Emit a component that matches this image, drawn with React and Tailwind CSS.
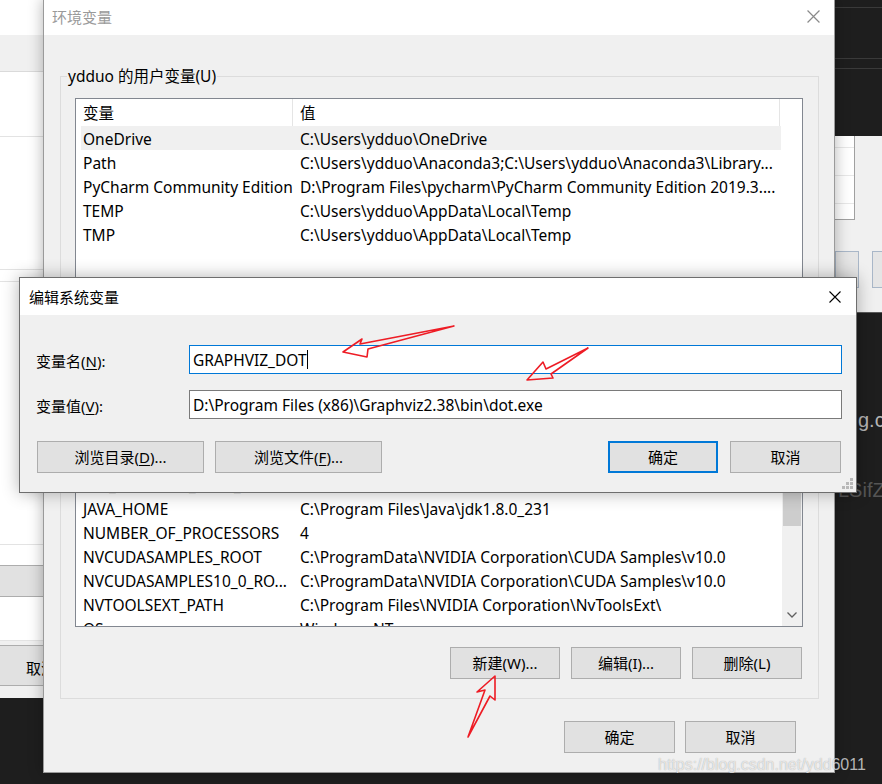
import clsx from 'clsx';

const userVars = [
  ['OneDrive', 'C:\\Users\\ydduo\\OneDrive'],
  ['Path', 'C:\\Users\\ydduo\\Anaconda3;C:\\Users\\ydduo\\Anaconda3\\Library...'],
  ['PyCharm Community Edition', 'D:\\Program Files\\pycharm\\PyCharm Community Edition 2019.3....'],
  ['TEMP', 'C:\\Users\\ydduo\\AppData\\Local\\Temp'],
  ['TMP', 'C:\\Users\\ydduo\\AppData\\Local\\Temp'],
];

const sysVars = [
  ['ComSpec', 'C:\\WINDOWS\\system32\\cmd.exe'],
  ['DriverData', 'C:\\Windows\\System32\\Drivers\\DriverData'],
  ['FPS_BROWSER_USER_PR...', 'Default'],
  ['JAVA_HOME', 'C:\\Program Files\\Java\\jdk1.8.0_231'],
  ['NUMBER_OF_PROCESSORS', '4'],
  ['NVCUDASAMPLES_ROOT', 'C:\\ProgramData\\NVIDIA Corporation\\CUDA Samples\\v10.0'],
  ['NVCUDASAMPLES10_0_RO...', 'C:\\ProgramData\\NVIDIA Corporation\\CUDA Samples\\v10.0'],
  ['NVTOOLSEXT_PATH', 'C:\\Program Files\\NVIDIA Corporation\\NvToolsExt\\'],
  ['OS', 'Windows_NT'],
];

const CloseX = ({ color = '#000', size = 12 }) => (
  <svg width={size} height={size} viewBox="0 0 12 12">
    <path d="M0.5 0.5 L11.5 11.5 M11.5 0.5 L0.5 11.5" stroke={color} strokeWidth="1.1" />
  </svg>
);

const Btn = ({ children, className, primary }) => (
  <div
    className={clsx(
      'h-[32px] flex items-center justify-center bg-[#e1e1e1] text-black text-[15px]',
      primary ? 'border-2 border-[#0078d7]' : 'border border-[#adadad]',
      className
    )}
  >
    {children}
  </div>
);

const ListHeader = () => (
  <div className="flex h-[27px] shrink-0">
    <div className="w-[217px] pl-[7px] pt-[1px] flex items-center border-r border-[#e5e5e5]">变量</div>
    <div className="w-[487px] pl-[7px] pt-[1px] flex items-center border-r border-[#e5e5e5]">值</div>
  </div>
);

const Row = ({ name, value, selected }) => (
  <div className={clsx('ml-[5px] w-[700px] h-[24px] shrink-0 flex items-center pt-[1px]', selected && 'bg-[#f0f0f0]')}>
    <div className="w-[212px] pl-[2px] whitespace-nowrap overflow-hidden">{name}</div>
    <div className="flex-1 pl-[7px] whitespace-nowrap overflow-hidden">{value}</div>
  </div>
);

export default function App() {
  return (
    <div className="relative w-[882px] h-[784px] overflow-hidden bg-[#1e1e1e] text-[15.5px] leading-[20px] text-black font-['Noto_Sans','Noto_Sans_CJK_SC',sans-serif]">

      {/* dark desktop bits on the right */}
      <div className="absolute left-[835px] top-[7px] w-[60px] h-px bg-[#3a3a3a]" />
      <div className="absolute left-[835px] top-[58px] w-[60px] h-px bg-[#3a3a3a]" />
      <div className="absolute left-[835px] top-[68px] w-[60px] h-px bg-[#3a3a3a]" />
      <div className="absolute left-[858px] top-[410px] text-[20px] text-[#b4b4b4] font-['Liberation_Sans',sans-serif]">g.cs</div>
      <div className="absolute left-[838px] top-[480px] text-[20px] text-[#555] font-['Liberation_Sans',sans-serif]">LSifZC</div>

      {/* window behind, left */}
      <div className="absolute left-0 top-0 w-[60px] h-[698px] bg-white flex flex-col">
        <div className="h-[35px] shrink-0" />
        <div className="h-[37px] shrink-0 bg-[#f0f0f0] border-b border-[#dadada]" />
        <div className="h-[65px] shrink-0 border-b border-[#e3e3e3]" />
        <div className="h-[133px] shrink-0 border-b border-[#e3e3e3]" />
        <div className="h-[12px] shrink-0 border-b border-[#e3e3e3]" />
        <div className="h-[263px] shrink-0 border-b border-[#e3e3e3]" />
        <div className="h-[20px] shrink-0" />
        <div className="h-[32px] shrink-0 bg-[#e1e1e1] border-y border-[#adadad]" />
        <div className="h-[44px] shrink-0 border-b border-[#e3e3e3]" />
        <div className="h-[4px] shrink-0 bg-[#f0f0f0]" />
        <div className="h-[41px] shrink-0 bg-[#e1e1e1] border-y border-[#adadad] flex items-center pl-[26px] pt-[4px] text-[15px]">取消</div>
        <div className="flex-1 bg-[#f0f0f0]" />
      </div>

      {/* window behind, right */}
      <div className="absolute left-[835px] top-[136px] w-[60px] h-[177px] bg-[#f0f0f0] border-b border-[#5a5a5a] flex flex-col">
        <div className="w-[20px] h-[84px] bg-white border-r border-b border-[#a0a0a0] flex flex-col">
          <div className="h-[12px] border-b border-[#e8e8e8]" />
          <div className="h-[28px] border-b border-[#e8e8e8]" />
          <div className="h-[28px] border-b border-[#e8e8e8]" />
        </div>
        <div className="mt-[31px] flex gap-[13px]">
          <div className="w-[29px] h-[37px] bg-[#e5e5e5] border border-[#a9b7c8]" />
          <div className="w-[29px] h-[37px] bg-[#e5e5e5] border border-[#a9b7c8]" />
        </div>
      </div>

      {/* 环境变量 */}
      <div className="absolute left-[43px] top-[-1px] w-[792px] h-[774px] bg-[#f0f0f0] border border-[#9a9a9a] shadow-[0_0_14px_rgba(0,0,0,0.3)] flex flex-col">
        <div className="h-[35px] shrink-0 bg-white flex items-center justify-between pl-[8px] pr-[14px] pb-[2px]">
          <span className="text-[#9a9a9a] text-[15px]">环境变量</span>
          <CloseX color="#8a8a8a" size={13} />
        </div>

        <div className="flex-1 flex flex-col pl-[16px] pr-[15px]">
          <fieldset className="mt-[31px] border border-[#dcdcdc] pb-[14px]">
            <legend className="ml-[6px] px-[1px]">ydduo 的用户变量(U)</legend>
            <div className="mt-[12px] ml-[14px] mr-[15px] h-[208px] bg-white border border-[#828790] flex flex-col overflow-hidden">
              <ListHeader />
              {userVars.map(([n, v], i) => (
                <Row key={n} name={n} value={v} selected={i === 0} />
              ))}
            </div>
            <div className="mt-[12px] mr-[16px] flex justify-end gap-[11px]">
              <Btn className="w-[110px]">新建(N)...</Btn>
              <Btn className="w-[110px]">编辑(E)...</Btn>
              <Btn className="w-[110px]">删除(D)</Btn>
            </div>
          </fieldset>

          <fieldset className="mt-[17px] border border-[#dcdcdc] pb-[19px]">
            <legend className="ml-[6px] px-[1px]">系统变量(S)</legend>
            <div className="mt-[12px] ml-[14px] mr-[15px] h-[213px] bg-white border border-[#828790] flex overflow-hidden">
              <div className="flex-1 flex flex-col overflow-hidden">
                <ListHeader />
                <div className="flex-1 overflow-hidden">
                  <div className="-mt-[18px] flex flex-col">
                    {sysVars.map(([n, v]) => (
                      <Row key={n} name={n} value={v} />
                    ))}
                  </div>
                </div>
              </div>
              <div className="w-[20px] shrink-0 bg-[#f0f0f0] flex flex-col items-center">
                <div className="h-[17px] shrink-0" />
                <div className="w-[18px] h-[94px] bg-[#cdcdcd]" />
                <div className="flex-1" />
                <div className="h-[17px] shrink-0 flex items-center justify-center mb-[3px]">
                  <svg width="10" height="6" viewBox="0 0 10 6">
                    <path d="M0.5 0.5 L5 5 L9.5 0.5" stroke="#606060" strokeWidth="1.3" fill="none" />
                  </svg>
                </div>
              </div>
            </div>
            <div className="mt-[20px] mr-[16px] flex justify-end gap-[11px]">
              <Btn className="w-[110px]">新建(W)...</Btn>
              <Btn className="w-[110px]">编辑(I)...</Btn>
              <Btn className="w-[110px]">删除(L)</Btn>
            </div>
          </fieldset>

          <div className="mt-[22px] mr-[23px] flex justify-end gap-[10px]">
            <Btn className="w-[111px]">确定</Btn>
            <Btn className="w-[111px]">取消</Btn>
          </div>
        </div>
      </div>

      {/* 编辑系统变量 */}
      <div className="absolute left-[19px] top-[277px] w-[838px] h-[216px] bg-[#f0f0f0] border border-[#6e6e6e] shadow-[0_0_16px_rgba(0,0,0,0.3)] flex flex-col">
        <div className="h-[37px] shrink-0 bg-white flex items-center justify-between pl-[9px] pr-[15px]">
          <span className="text-[15px]">编辑系统变量</span>
          <CloseX size={12} />
        </div>
        <div className="flex-1 flex flex-col pl-[16px] pr-[14px] pt-[30px]">
          <div className="flex items-center h-[29px]">
            <div className="w-[153px] pt-[3px] text-[15px]">变量名(<span className="underline underline-offset-2">N</span>):</div>
            <div className="flex-1 h-full bg-white border border-[#0078d7] flex items-center pl-[3px]">
              GRAPHVIZ_DOT<span className="w-px h-[19px] bg-black" />
            </div>
          </div>
          <div className="mt-[16px] flex items-center h-[29px]">
            <div className="w-[153px] pt-[3px] text-[15px]">变量值(<span className="underline underline-offset-2">V</span>):</div>
            <div className="flex-1 h-full bg-white border border-[#7a7a7a] flex items-center pl-[3px]">
              D:\Program Files (x86)\Graphviz2.38\bin\dot.exe
            </div>
          </div>
          <div className="mt-[22px] flex items-center pl-[1px] pr-[1px]">
            <Btn className="w-[167px]">浏览目录(<span className="underline underline-offset-2">D</span>)...</Btn>
            <Btn className="w-[167px] ml-[11px]">浏览文件(<span className="underline underline-offset-2">F</span>)...</Btn>
            <div className="flex-1" />
            <Btn primary className="w-[110px]">确定</Btn>
            <Btn className="w-[111px] ml-[12px]">取消</Btn>
          </div>
        </div>
        <svg className="absolute right-[2px] bottom-[2px]" width="12" height="12" viewBox="0 0 12 12">
          <g fill="#b8b8b8">
            <rect x="8" y="0" width="3" height="3" />
            <rect x="4" y="4" width="3" height="3" />
            <rect x="8" y="4" width="3" height="3" />
            <rect x="0" y="8" width="3" height="3" />
            <rect x="4" y="8" width="3" height="3" />
            <rect x="8" y="8" width="3" height="3" />
          </g>
        </svg>
      </div>

      {/* hand-drawn red arrows */}
      <svg className="absolute left-0 top-0 pointer-events-none" width="882" height="784" viewBox="0 0 882 784">
        <g fill="none" stroke="#ee1c25" strokeWidth="1.6" strokeLinejoin="round">
          <path d="M343 352 L362 339 L360 344 L454 326 L368 349 L367 357 Z" />
          <path d="M527 380 L543 362 L546 369 L588 348 L551 374 L553 378 Z" />
          <path d="M495 676 L477 692 L485 690 L468 737 L490 696 L495 700 Z" />
        </g>
      </svg>

      {/* watermark */}
      <div className="absolute left-[658px] top-[755px] text-[16px] text-white/70 font-['Liberation_Sans',sans-serif] [text-shadow:0_0_1px_rgba(0,0,0,0.35)] whitespace-nowrap">
        https://blog.csdn.net/ydd6011
      </div>
    </div>
  );
}
